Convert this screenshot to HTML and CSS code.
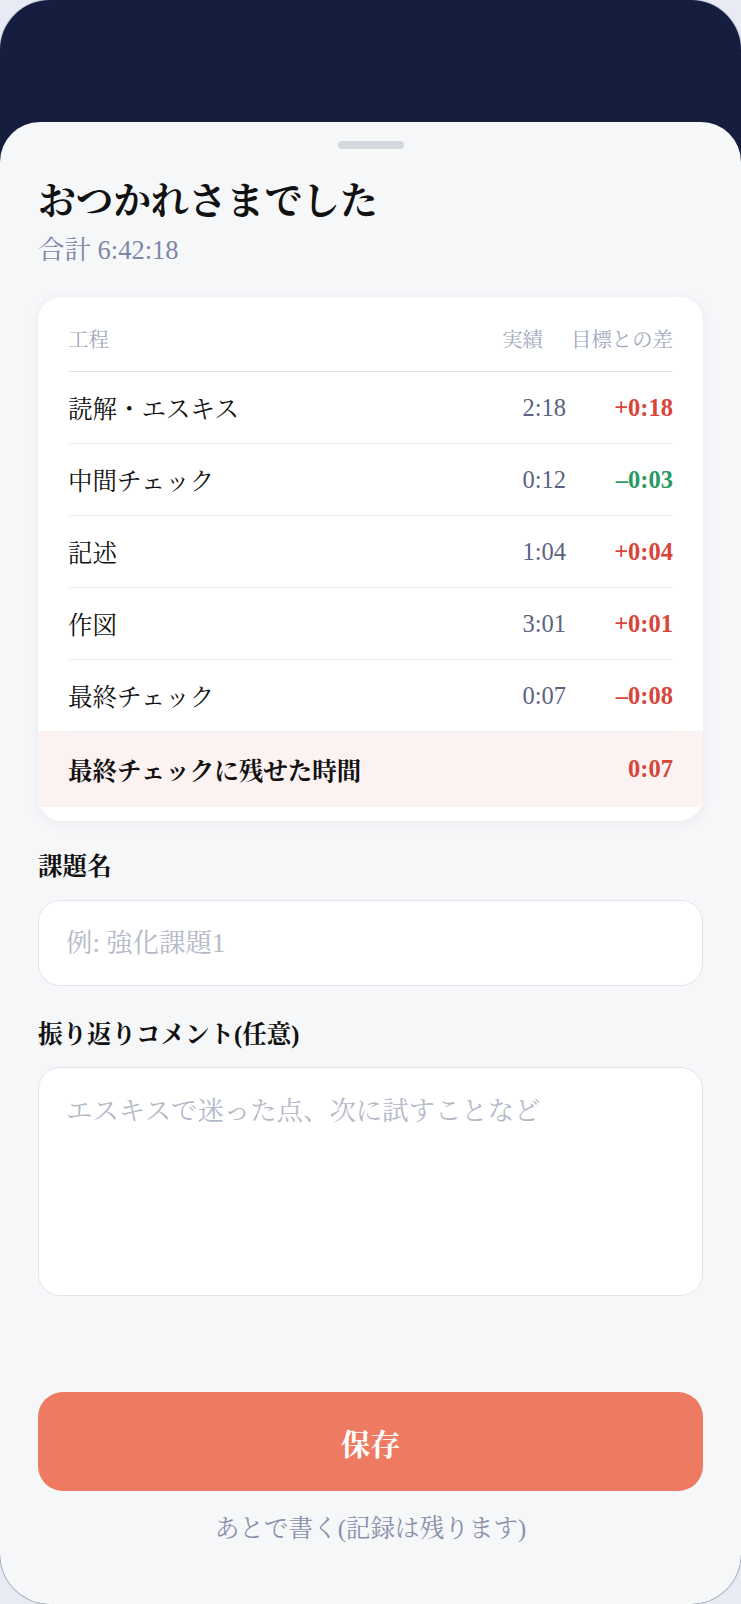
FILE: index.html
```html
<!DOCTYPE html>
<html lang="ja">
<head>
    <meta charset="UTF-8">
    <meta name="viewport" content="width=device-width, initial-scale=1.0">
    <title>おつかれさまでした</title>
    <link rel="stylesheet" href="styles.css">
</head>
<body>
    <div class="phone">
        <div class="sheet">
            <div class="handle"></div>

            <h1 class="title">おつかれさまでした</h1>
            <div class="total">合計 6:42:18</div>

            <div class="card">
                <div class="row head">
                    <span>工程</span>
                    <span class="actual head-actual">実績</span>
                    <span class="diff">目標との差</span>
                </div>
                <div class="row">
                    <span>読解・エスキス</span>
                    <span class="actual">2:18</span>
                    <span class="diff over">+0:18</span>
                </div>
                <div class="row">
                    <span>中間チェック</span>
                    <span class="actual">0:12</span>
                    <span class="diff under">–0:03</span>
                </div>
                <div class="row">
                    <span>記述</span>
                    <span class="actual">1:04</span>
                    <span class="diff over">+0:04</span>
                </div>
                <div class="row">
                    <span>作図</span>
                    <span class="actual">3:01</span>
                    <span class="diff over">+0:01</span>
                </div>
                <div class="row">
                    <span>最終チェック</span>
                    <span class="actual">0:07</span>
                    <span class="diff over">–0:08</span>
                </div>
                <div class="row remain">
                    <span>最終チェックに残せた時間</span>
                    <span></span>
                    <span class="diff over">0:07</span>
                </div>
            </div>

            <label class="label" for="task">課題名</label>
            <input class="field" id="task" type="text" placeholder="例: 強化課題1">

            <label class="label" for="note">振り返りコメント(任意)</label>
            <textarea class="field note" id="note" placeholder="エスキスで迷った点、次に試すことなど"></textarea>

            <div class="actions">
                <button class="save">保存</button>
                <div class="later">あとで書く(記録は残ります)</div>
            </div>
        </div>
    </div>
</body>
</html>
```

FILE: styles.css
```css
body {
    margin: 0;
    background-color: #e8ebf3;
    font-family: "Liberation Serif", "Noto Serif CJK JP", "Noto Serif JP", "IPAMincho", serif;
    color: #111;
}

.phone {
    height: 100vh;
    display: flex;
    flex-direction: column;
    padding-top: 122px;
    box-sizing: border-box;
    background-color: #161e3f;
    border-radius: 50px;
    overflow: hidden;
    box-shadow: 0 0 0 1px #c3c7d5;
}

.sheet {
    flex: 1;
    display: flex;
    flex-direction: column;
    padding: 19px 38px 59px;
    background-color: #f6f7f9;
    border-radius: 40px 40px 0 0;
}

.handle {
    align-self: center;
    width: 66px;
    height: 8px;
    border-radius: 4px;
    background-color: #d5d7de;
}

.title {
    margin: 28px 0 0;
    font-size: 37.8px;
    line-height: 48px;
    font-weight: bold;
}

.total {
    margin-top: 8px;
    font-size: 26.5px;
    line-height: 34px;
    color: #7e86a6;
}

.card {
    margin-top: 30px;
    padding: 0 30px 14px;
    background-color: #fff;
    border-radius: 24px;
    box-shadow: 0 2px 14px rgba(30, 40, 80, 0.06);
}

.row {
    display: grid;
    grid-template-columns: 1fr auto 107px;
    align-items: center;
    height: 72px;
    box-sizing: border-box;
    border-top: 1px solid #eceef2;
    font-size: 24.5px;
}

.row.head {
    height: 74px;
    align-items: start;
    padding-top: 30px;
    border-top: none;
    font-size: 20.4px;
    line-height: 26px;
    color: #a1a7bc;
}

.row.head + .row {
    border-top-color: #e2e4ec;
}

.actual {
    text-align: right;
    color: #5b6384;
}

.head-actual {
    padding-right: 23px;
    color: #a1a7bc;
}

.diff {
    text-align: right;
    font-weight: bold;
}

.head .diff {
    font-weight: normal;
}

.over {
    color: #d8453b;
}

.under {
    color: #2a9a63;
}

/* line only under the padded part, the pink runs edge to edge */
.row.remain {
    height: 76px;
    margin: 0 -30px;
    padding: 0 30px;
    border-top: none;
    background: linear-gradient(#eceef2, #eceef2) 30px 0 / calc(100% - 60px) 1px no-repeat, #fcf2f1;
    font-weight: bold;
}

.label {
    margin-top: 30px;
    font-size: 24.5px;
    line-height: 32px;
    font-weight: bold;
}

.field {
    margin-top: 17px;
    height: 86px;
    padding: 0 27px;
    box-sizing: border-box;
    border: 1px solid #e1e4ec;
    border-radius: 22px;
    background-color: #fff;
    font-family: "Liberation Serif", "Noto Serif CJK JP", "Noto Serif JP", "IPAMincho", serif;
    font-size: 26.4px;
    color: #111;
    outline: none;
}

.field + .label {
    margin-top: 33px;
}

.note {
    margin-top: 16px;
    height: 229px;
    padding-top: 25px;
    line-height: 36px;
    resize: none;
}

.field::placeholder {
    color: #b4b9c9;
}

.actions {
    margin-top: auto;
    display: flex;
    flex-direction: column;
    gap: 22px;
}

.save {
    height: 99px;
    border: none;
    border-radius: 25px;
    background-color: #ee7b61;
    color: #fff;
    font-family: "Liberation Serif", "Noto Serif CJK JP", "Noto Serif JP", "IPAMincho", serif;
    font-size: 29.5px;
    font-weight: bold;
    cursor: pointer;
}

.later {
    text-align: center;
    font-size: 24.6px;
    line-height: 32px;
    color: #8a90ab;
}
```
